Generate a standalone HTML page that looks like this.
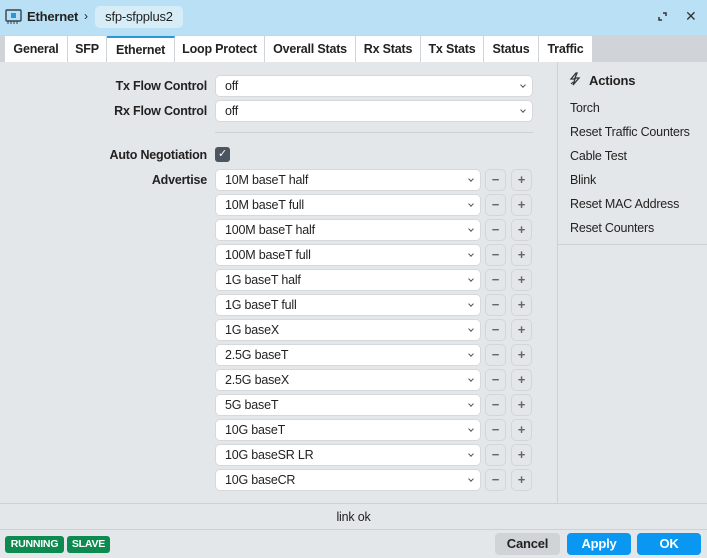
<!DOCTYPE html>
<html><head><style>
*{box-sizing:border-box;margin:0;padding:0}
body{width:707px;height:558px;overflow:hidden;font-family:"Liberation Sans",sans-serif;font-size:12.5px;color:#222;background:#e4e7e9;position:relative;letter-spacing:-0.2px}
.title{position:absolute;left:0;top:0;width:707px;height:35px;background:#b9e0f4}
.tabs{position:absolute;left:0;top:35px;width:707px;height:27px;background:#d0d4d8}
.tab{position:absolute;top:1px;height:26px;background:#fff;font-weight:bold;font-size:12.5px;line-height:27px;text-align:center;border-right:1px solid #d0d4d8}
.tab.act{border-top:2px solid #2b96d8;line-height:24px}
.lbl{position:absolute;font-weight:bold;text-align:right;width:120px;left:87px}
.sel{position:absolute;height:22px;background:#fff;border-radius:5px;border:1px solid #d6d9dc;padding-left:9px;line-height:21px}
.sel::after{content:"";position:absolute;right:7px;top:7px;width:3px;height:3px;border-right:1px solid #555;border-bottom:1px solid #555;transform:rotate(45deg)}
.btn{position:absolute;width:21px;height:22px;border:1px solid #d3d6d9;border-radius:5px;text-align:center;line-height:19px;font-size:13px;color:#666;font-weight:bold}
.act-i{position:absolute;left:570px;font-size:12.5px}
.badge{position:absolute;top:536px;height:17px;background:#0c8a4f;color:#fff;font-size:10.5px;font-weight:bold;border-radius:3px;line-height:17px;text-align:center}
.fb{position:absolute;top:533px;height:22px;border-radius:4px;font-weight:bold;text-align:center;line-height:22px;font-size:13px}
</style></head><body>
<div class="title">
<svg style="position:absolute;left:5px;top:9px" width="18" height="16" viewBox="0 0 18 16"><rect x="1" y="1" width="15" height="11" rx="1" fill="none" stroke="#345" stroke-width="1.4"/><rect x="6" y="4" width="5" height="5" fill="#2b96d8"/><path d="M3 12v3M6 12v3M9 12v3M12 12v3" stroke="#345" stroke-width="1"/></svg>
<div style="position:absolute;left:27px;top:9px;font-weight:bold;font-size:13px">Ethernet</div>
<div style="position:absolute;left:84px;top:9px;font-size:12px">›</div>
<div style="position:absolute;left:95px;top:6px;width:88px;height:22px;background:#d6edf8;border-radius:5px;line-height:22px;text-align:center;font-size:13px">sfp-sfpplus2</div>
<svg style="position:absolute;left:658px;top:12px" width="9" height="9" viewBox="0 0 9 9"><path d="M5 1h3v3M1 5v3h3" fill="none" stroke="#333" stroke-width="1.5"/></svg>
<div style="position:absolute;left:685px;top:8px;font-size:14px;color:#333">✕</div>
</div>
<div class="tabs">
<div class="tab" style="left:5px;width:63px">General</div>
<div class="tab" style="left:68px;width:39px">SFP</div>
<div class="tab act" style="left:107px;width:68px">Ethernet</div>
<div class="tab" style="left:175px;width:90px">Loop Protect</div>
<div class="tab" style="left:265px;width:91px">Overall Stats</div>
<div class="tab" style="left:356px;width:65px">Rx Stats</div>
<div class="tab" style="left:421px;width:63px">Tx Stats</div>
<div class="tab" style="left:484px;width:55px">Status</div>
<div class="tab" style="left:539px;width:53px;border-right:none">Traffic</div>
</div>
<div class="lbl" style="top:79px">Tx Flow Control</div>
<div class="sel" style="left:215px;top:75px;width:318px">off</div>
<div class="lbl" style="top:104px">Rx Flow Control</div>
<div class="sel" style="left:215px;top:100px;width:318px">off</div>
<div style="position:absolute;left:215px;top:132px;width:318px;height:1px;background:#cdd1d4"></div>
<div class="lbl" style="top:148px">Auto Negotiation</div>
<div style="position:absolute;left:215px;top:147px;width:15px;height:15px;background:#4a5560;border-radius:3px;color:#fff;font-size:11px;line-height:15px;text-align:center">✓</div>
<div class="lbl" style="top:173px">Advertise</div>
<div style="position:absolute;left:0;top:0">
<div class="sel" style="left:215px;top:169px;width:266px">10M baseT half</div><div class="btn" style="left:485px;top:169px">−</div><div class="btn" style="left:511px;top:169px">+</div>
<div class="sel" style="left:215px;top:194px;width:266px">10M baseT full</div><div class="btn" style="left:485px;top:194px">−</div><div class="btn" style="left:511px;top:194px">+</div>
<div class="sel" style="left:215px;top:219px;width:266px">100M baseT half</div><div class="btn" style="left:485px;top:219px">−</div><div class="btn" style="left:511px;top:219px">+</div>
<div class="sel" style="left:215px;top:244px;width:266px">100M baseT full</div><div class="btn" style="left:485px;top:244px">−</div><div class="btn" style="left:511px;top:244px">+</div>
<div class="sel" style="left:215px;top:269px;width:266px">1G baseT half</div><div class="btn" style="left:485px;top:269px">−</div><div class="btn" style="left:511px;top:269px">+</div>
<div class="sel" style="left:215px;top:294px;width:266px">1G baseT full</div><div class="btn" style="left:485px;top:294px">−</div><div class="btn" style="left:511px;top:294px">+</div>
<div class="sel" style="left:215px;top:319px;width:266px">1G baseX</div><div class="btn" style="left:485px;top:319px">−</div><div class="btn" style="left:511px;top:319px">+</div>
<div class="sel" style="left:215px;top:344px;width:266px">2.5G baseT</div><div class="btn" style="left:485px;top:344px">−</div><div class="btn" style="left:511px;top:344px">+</div>
<div class="sel" style="left:215px;top:369px;width:266px">2.5G baseX</div><div class="btn" style="left:485px;top:369px">−</div><div class="btn" style="left:511px;top:369px">+</div>
<div class="sel" style="left:215px;top:394px;width:266px">5G baseT</div><div class="btn" style="left:485px;top:394px">−</div><div class="btn" style="left:511px;top:394px">+</div>
<div class="sel" style="left:215px;top:419px;width:266px">10G baseT</div><div class="btn" style="left:485px;top:419px">−</div><div class="btn" style="left:511px;top:419px">+</div>
<div class="sel" style="left:215px;top:444px;width:266px">10G baseSR LR</div><div class="btn" style="left:485px;top:444px">−</div><div class="btn" style="left:511px;top:444px">+</div>
<div class="sel" style="left:215px;top:469px;width:266px">10G baseCR</div><div class="btn" style="left:485px;top:469px">−</div><div class="btn" style="left:511px;top:469px">+</div>
</div>
<div style="position:absolute;left:557px;top:62px;width:1px;height:441px;background:#cdd1d4"></div>
<div style="position:absolute;left:558px;top:244px;width:149px;height:1px;background:#cdd1d4"></div>
<svg style="position:absolute;left:568px;top:72px" width="14" height="14" viewBox="0 0 14 14"><path d="M8 1L3 7h4l-2 6 6-7H7l2-5z" fill="none" stroke="#333" stroke-width="1.3"/><path d="M3 12l2-2" stroke="#333"/></svg>
<div style="position:absolute;left:589px;top:73px;font-weight:bold;font-size:13px">Actions</div>
<div class="act-i" style="top:101px">Torch</div>
<div class="act-i" style="top:125px">Reset Traffic Counters</div>
<div class="act-i" style="top:149px">Cable Test</div>
<div class="act-i" style="top:173px">Blink</div>
<div class="act-i" style="top:197px">Reset MAC Address</div>
<div class="act-i" style="top:221px">Reset Counters</div>
<div style="position:absolute;left:0;top:503px;width:707px;height:1px;background:#cdd1d4"></div>
<div style="position:absolute;left:0;top:510px;width:707px;text-align:center">link ok</div>
<div style="position:absolute;left:0;top:529px;width:707px;height:1px;background:#cdd1d4"></div>
<div class="badge" style="left:5px;width:59px">RUNNING</div>
<div class="badge" style="left:67px;width:43px">SLAVE</div>
<div class="fb" style="left:495px;width:65px;background:#d0d4d8;color:#222">Cancel</div>
<div class="fb" style="left:567px;width:64px;background:#0a97f2;color:#fff">Apply</div>
<div class="fb" style="left:637px;width:64px;background:#0a97f2;color:#fff">OK</div>
</body></html>
